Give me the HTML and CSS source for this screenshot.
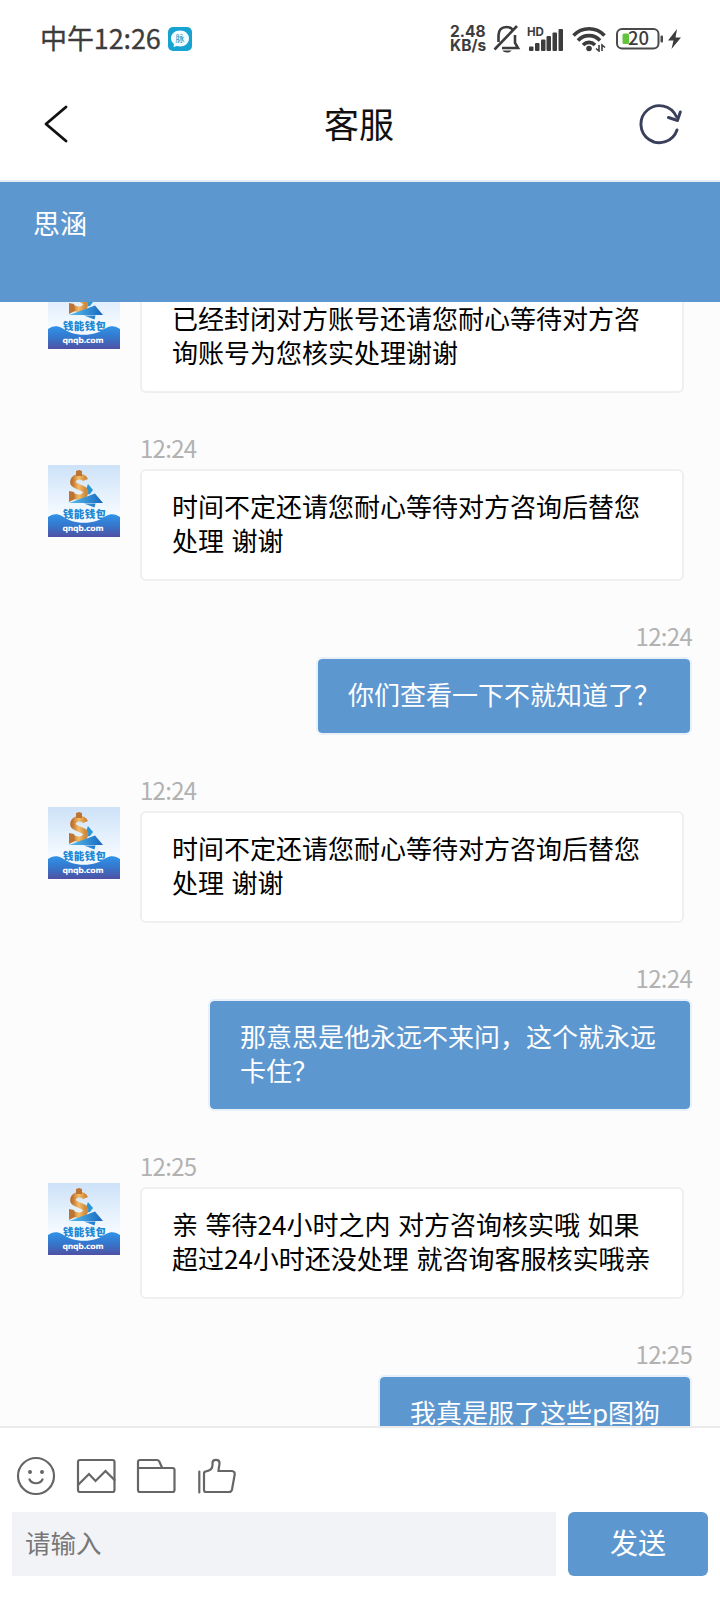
FILE: index.html
```html
<!DOCTYPE html>
<html lang="zh-CN">
<head>
<meta charset="utf-8">
<title>客服</title>
<link rel="stylesheet" href="styles.css">
</head>
<body>
<svg width="0" height="0" class="defs" aria-hidden="true">
  <defs>
    <linearGradient id="sky" x1="0" y1="0" x2="0" y2="1"><stop offset="0" stop-color="#cde2f8"/><stop offset=".65" stop-color="#f3f9ff"/></linearGradient>
    <linearGradient id="sea" x1="0" y1="0" x2="0" y2="1"><stop offset="0" stop-color="#2f93e8"/><stop offset=".5" stop-color="#3577cc"/><stop offset="1" stop-color="#5050a4"/></linearGradient>
    <linearGradient id="sail" x1="0" y1="0" x2="1" y2="0"><stop offset="0" stop-color="#59c0ef"/><stop offset="1" stop-color="#1767bd"/></linearGradient>
    <linearGradient id="gold" x1="0" y1="0" x2="1" y2="0"><stop offset="0" stop-color="#bd6f2c"/><stop offset=".5" stop-color="#f3bc68"/><stop offset="1" stop-color="#d08a3c"/></linearGradient>
  </defs>
  <symbol id="logo" viewBox="0 0 72 72">
    <rect width="72" height="72" fill="url(#sky)"/>
    <path d="M40 19l5 6-3 4-6 1z" fill="#2798d5"/>
    <path d="M37.500 15c-2-4.500-11-4.500-12.500 1-1.500 7 13 5 12.500 11.500-.5 5-8 6.500-13.500 2.500" fill="none" stroke="url(#gold)" stroke-width="5.500"/>
    <path d="M28 6l3-1 3 1v5h-6zM21 26l5 1 1 7-6 3z" fill="#bd7433"/>
    <path d="M21 38l26-9.500 8 9.500zM36 38.500h11.500l-1 4z" fill="url(#sail)"/>
    <text x="36.500" y="53" text-anchor="middle" textLength="43" class="logo-name">钱能钱包</text>
    <path d="M0 52c4-3 9-4 14-1 6 4 13 6.800 22 6.800s16-2.800 22-6.800c5-3 10-2 14 1v20H0z" fill="url(#sea)"/>
    <text x="35" y="65.500" text-anchor="middle" textLength="41" class="logo-url">qnqb.com</text>
  </symbol>
</svg>

<div class="app">
  <header class="status">
    <div class="clock">中午12:26</div>
    <svg class="mai" width="24" height="24" viewBox="0 0 24 24"><rect width="24" height="24" rx="5" fill="#16a3d2"/><path d="M12 3.500c5.200 0 9 3.500 9 8s-3.800 8-9 8c-1 0-2 0-3-.4L5.500 20l.5-3c-2-1.500-3-3.300-3-5.500 0-4.500 3.800-8 9-8z" fill="#f2fcff"/><text x="12" y="15" text-anchor="middle" class="mai-text">脉</text></svg>
    <div class="speed"><span>2.48</span><span>KB/s</span></div>
    <svg class="bell" width="28" height="30" viewBox="0 0 28 30" fill="none" stroke="#3c3c3c" stroke-width="2.600"><path d="M5.500 18V11.500c0-5.500 3-8.500 8-8.500 3 0 5 1 6.500 3M22 11v8l3 5H9M1.500 25.500L24 2"/><path d="M9.500 26.500h9c-1 2.600-8 2.600-9 0z" fill="#3c3c3c" stroke="none"/></svg>
    <svg class="signal" width="38" height="26" viewBox="0 0 38 26"><text x="0" y="9.500" class="hd">HD</text><g fill="#3c3c3c"><rect x="2" y="20.500" width="4.500" height="4.500" rx="1"/><rect x="8" y="17" width="4.500" height="8" rx="1"/><rect x="14" y="13.500" width="4.500" height="11.500" rx="1"/><rect x="19.500" y="10" width="4.500" height="15" rx="1"/><rect x="25.500" y="6.500" width="4.500" height="18.500" rx="1"/><rect x="31.500" y="3" width="4.500" height="22" rx="1"/></g></svg>
    <svg class="wifi" width="34" height="26" viewBox="0 0 34 26" fill="none" stroke="#3c3c3c" stroke-width="3.600"><path d="M1.500 9.500C10 .500 24 .500 32.500 9.500M6 14.500c6-6.500 16-6.500 22 0M11 19c3.500-3.500 8.500-3.500 12 0"/><circle cx="17" cy="22.500" r="2.800" fill="#3c3c3c" stroke="none"/><path d="M27 19v6l-3-2.500M30 25v-6l3 2.500" stroke-width="1.600"/></svg>
    <svg class="battery" width="48" height="22" viewBox="0 0 48 22"><rect x="1" y="1" width="41.500" height="19.500" rx="5" fill="none" stroke="#4a4a4a" stroke-width="2"/><rect x="44.500" y="7.500" width="2.500" height="7" rx="1" fill="#4a4a4a"/><rect x="6.500" y="5.500" width="6.500" height="10.500" rx="1.500" fill="#62c43a"/><text x="22.500" y="17.300" text-anchor="middle" class="charge">20</text></svg>
    <svg class="bolt" width="13" height="20" viewBox="0 0 13 20"><path d="M9 0L0 11.500h5.500L3.500 20 13 8.500H7.500z" fill="#3c3c3c"/></svg>
  </header>

  <nav class="nav">
    <svg width="40" height="44" viewBox="0 0 40 44"><path d="M30 5L10 22l20 17" fill="none" stroke="#111" stroke-width="2.900" stroke-linecap="round" stroke-linejoin="round"/></svg>
    <h1 class="title">客服</h1>
    <svg width="44" height="44" viewBox="0 0 44 44"><path d="M38 28A18.500 18.500 0 1 1 37.300 14.500M29.500 15.500l9 3 2.800-8.500" fill="none" stroke="#3a405c" stroke-width="2.900" stroke-linecap="round" stroke-linejoin="round"/></svg>
  </nav>

  <div class="agent">思涵</div>

  <main class="chat">
    <section class="msg">
      <svg class="avatar"><use href="#logo"/></svg>
      <div class="body"><div class="time"></div><div class="bubble">已经封闭对方账号还请您耐心等待对方咨<br>询账号为您核实处理谢谢</div></div>
    </section>
    <section class="msg">
      <svg class="avatar"><use href="#logo"/></svg>
      <div class="body"><div class="time">12:24</div><div class="bubble">时间不定还请您耐心等待对方咨询后替您<br>处理 谢谢</div></div>
    </section>
    <section class="msg mine">
      <div class="body"><div class="time">12:24</div><div class="bubble">你们查看一下不就知道了？</div></div>
    </section>
    <section class="msg">
      <svg class="avatar"><use href="#logo"/></svg>
      <div class="body"><div class="time">12:24</div><div class="bubble">时间不定还请您耐心等待对方咨询后替您<br>处理 谢谢</div></div>
    </section>
    <section class="msg mine">
      <div class="body"><div class="time">12:24</div><div class="bubble wrapped">那意思是他永远不来问，这个就永远<br>卡住？</div></div>
    </section>
    <section class="msg">
      <svg class="avatar"><use href="#logo"/></svg>
      <div class="body"><div class="time">12:25</div><div class="bubble">亲 等待24小时之内 对方咨询核实哦 如果<br>超过24小时还没处理 就咨询客服核实哦亲</div></div>
    </section>
    <section class="msg mine">
      <div class="body"><div class="time">12:25</div><div class="bubble">我真是服了这些p图狗</div></div>
    </section>
  </main>

  <footer class="composer">
    <div class="tools">
      <svg viewBox="0 0 40 40"><circle cx="20" cy="20" r="18"/><path d="M13.500 23.500c2.500 5 10.500 5 13 0"/><circle cx="14" cy="16" r="2" class="dot"/><circle cx="26" cy="16" r="2" class="dot"/></svg>
      <svg viewBox="0 0 40 40"><rect x="2" y="4" width="36.500" height="32" rx="2"/><path d="M2.500 28.500L13 18l6.500 7 10-10 9 9"/></svg>
      <svg viewBox="0 0 40 40"><path d="M2 12V6q0-2 2-2h17q1.500 0 2.300 1.500L26 11.500M2 12h34.500q2 0 2 2v20q0 2-2 2H4q-2 0-2-2z"/></svg>
      <svg viewBox="0 0 40 40"><path d="M3.300 15.500v21M8 34V17.500q0-2 2-2.200c4-.5 6.500-2.500 6.500-6.300V7c0-4.300 7-4.300 7 0 0 3-1 5-1 8h13.500q3 .3 2.700 3.500L36 33.500q-.6 2.500-3 2.500H10q-2 0-2-2z"/></svg>
    </div>
    <div class="entry">
      <input class="field" type="text" placeholder="请输入">
      <button class="send" type="button">发送</button>
    </div>
  </footer>
</div>
</body>
</html>
```

FILE: styles.css
```css
* { box-sizing: border-box; }
body {
  margin: 0;
  background: #fff;
  font-family: "Noto Sans CJK SC", sans-serif;
  color: #000;
}
.defs { position: absolute; }
.app {
  width: 720px;
  height: 1600px;
  display: flex;
  flex-direction: column;
  overflow: hidden;
}

.status {
  height: 68px;
  flex: none;
  display: flex;
  align-items: center;
  padding: 10px 39px 0 40px;
}
.clock { font-size: 27px; line-height: 32px; padding-bottom: 2px; color: #3c3c3c; letter-spacing: -.1px; -webkit-text-stroke: .3px #3c3c3c; }
.mai { margin-left: 7px; }
.mai-text { font-size: 9px; fill: #2395b8; }
.speed {
  margin-left: auto;
  display: flex;
  flex-direction: column;
  font: 700 15.500px/14.500px Inter, sans-serif;
  color: #3c3c3c;
  width: 37px;
}
.speed span { height: 14.500px; }
.bell { margin-left: 6px; }
.signal { margin-left: 6px; overflow: visible; }
.hd { font: 700 11.500px Inter, sans-serif; fill: #3c3c3c; }
.wifi { margin-left: 7px; }
.battery { margin-left: 10px; }
.charge { font: 500 18.500px "Noto Sans CJK SC", sans-serif; fill: #3c3c3c; }
.bolt { margin-left: 4px; }

.nav {
  height: 114px;
  flex: none;
  display: flex;
  align-items: center;
  justify-content: space-between;
  padding: 0 37px 0 36px;
  border-bottom: 2px solid #e4ebf2;
}
.title { margin: 0; padding: 0 0 3px 3px; font-size: 35px; font-weight: 400; line-height: 44px; color: #111; }

.agent {
  height: 120px;
  flex: none;
  padding: 21px 33px;
  background: #5d97d0;
  color: #fff;
  font-size: 27px;
  line-height: 40px;
}

.chat {
  flex: 1;
  min-height: 0;
  overflow: hidden;
  display: flex;
  flex-direction: column;
  gap: 36px;
  background: #fcfcfc;
}
.msg { flex: none; display: flex; align-items: flex-start; gap: 20px; padding: 0 28px 0 48px; }
.msg:first-child { margin-top: -61px; }
.mine { justify-content: flex-end; }
.avatar { width: 72px; height: 72px; margin-top: 36px; flex: none; }
.logo-name { font-size: 10.500px; font-weight: 900; fill: #2187d3; }
.logo-url { font: 700 7.800px "DejaVu Sans", sans-serif; fill: #fff; }
.body { display: flex; flex-direction: column; }
.time {
  height: 40px;
  padding-top: 1px;
  font-size: 24px;
  line-height: 36px;
  letter-spacing: -.7px;
  color: #b2b2b2;
}
.mine .time { text-align: right; }
.bubble {
  width: 544px;
  padding: 18px 30px 22px;
  border: 2px solid #efefef;
  border-radius: 6px;
  background: #fff;
  font-size: 26px;
  line-height: 34px;
  word-spacing: 1.700px;
  white-space: nowrap;
}
.mine .bubble {
  width: auto;
  min-width: 0;
  border-color: #e8f1fa;
  background: #5d97d0;
  background-clip: padding-box;
  color: #fff;
}
.mine .wrapped { padding-right: 34px; }

.composer {
  height: 174px;
  flex: none;
  border-top: 2px solid #ebebeb;
  background: #fff;
  padding: 28px 12px 0;
}
.tools { display: flex; gap: 20px; padding-left: 4px; height: 56px; }
.tools svg {
  width: 40px;
  height: 40px;
  fill: none;
  stroke: #666;
  stroke-width: 2.200;
  stroke-linecap: round;
}
.tools .dot { fill: #666; stroke: none; }
.entry { display: flex; gap: 12px; height: 64px; }
.field {
  flex: 1;
  min-width: 0;
  border: 0;
  padding: 0 13px 5px;
  background: #f2f3f7;
  font: 25.500px "Noto Sans CJK SC", sans-serif;
}
.field::placeholder { color: #777; opacity: 1; }
.send {
  width: 140px;
  border: 0;
  border-radius: 6px;
  padding: 0 0 4px;
  background: #5d97d0;
  color: #fff;
  font: 28px "Noto Sans CJK SC", sans-serif;
}
```
